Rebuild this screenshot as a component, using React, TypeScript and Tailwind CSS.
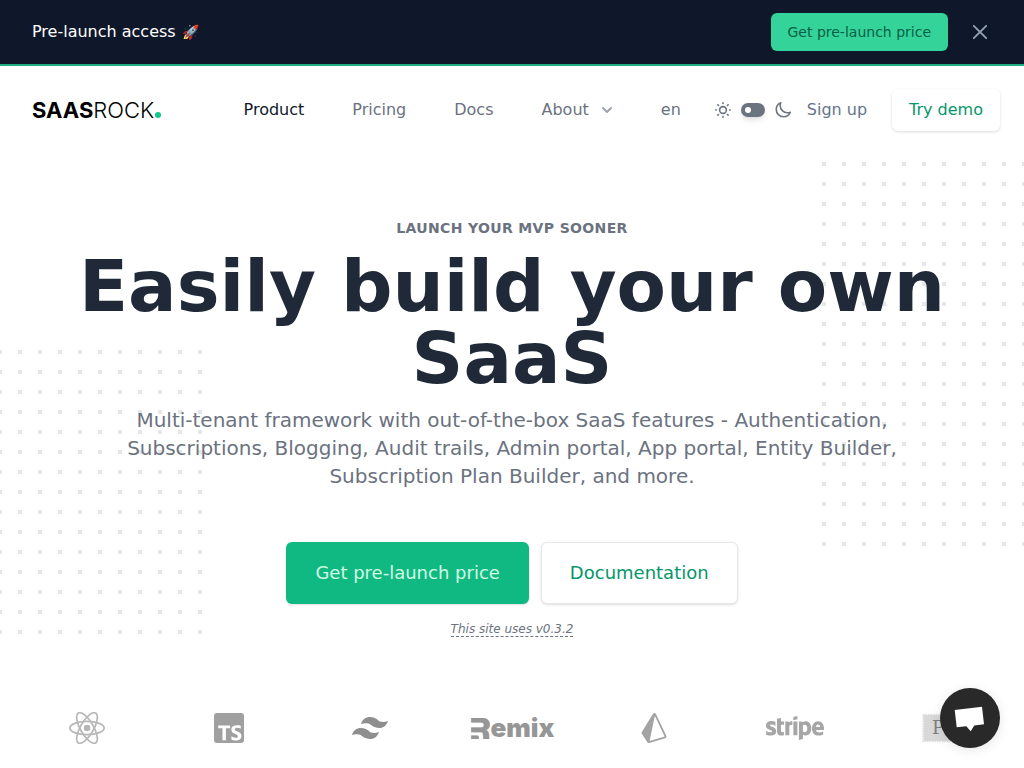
import React, { useState } from "react";
import { FaStripe } from "react-icons/fa";
import { HiOutlineMoon } from "react-icons/hi2";
import { SiPrisma, SiRemix, SiTypescript } from "react-icons/si";

function Banner({ onClose }: { onClose: () => void }) {
  return (
    <div className="flex items-center justify-between border-b-2 border-[#1fae82] bg-[#0f172a] px-8 py-[13px]">
      <p className="flex items-center gap-1.5 text-base text-white">
        Pre-launch access <span className="text-sm">🚀</span>
      </p>
      <div className="flex items-center gap-5">
        <a href="#pricing" className="rounded-md bg-[#34d399] px-[17px] py-[9px] text-sm text-[#065f46]">
          Get pre-launch price
        </a>
        <button type="button" aria-label="Dismiss" onClick={onClose} className="text-[#94a3b8]">
          <svg className="size-6" viewBox="0 0 24 24" fill="none" stroke="currentColor" strokeWidth="1.8" strokeLinecap="round">
            <path d="M5.8 5.8l12.4 12.4M18.2 5.8l-12.4 12.4" />
          </svg>
        </button>
      </div>
    </div>
  );
}

function SunIcon() {
  return (
    <svg className="size-4" viewBox="0 0 16 16" fill="none" stroke="currentColor" strokeWidth="1.6" strokeLinecap="round" aria-hidden="true">
      <circle cx="8" cy="8" r="3.4" />
      <path d="M8 .8v.6M8 14.6v.6M.8 8h.6M14.6 8h.6M2.9 2.9l.6.6M12.5 12.5l.6.6M2.9 13.1l.6-.6M12.5 3.5l.6-.6" />
    </svg>
  );
}

function Nav() {
  const [dark, setDark] = useState(false);
  return (
    <header className="flex items-center justify-between pt-[23px] pr-6 pl-8 text-base text-[#6b7280]">
      <a href="#home" className="flex items-baseline font-['Inter',sans-serif] text-[22px] leading-8 text-black">
        <span className="font-bold">SAAS</span>
        <span className="font-light">ROCK</span>
        <span className="ml-px size-1.5 rounded-full bg-[#10c98b]" />
      </a>
      <div className="flex items-center">
        <nav className="flex items-center gap-12">
          <a href="#product" className="text-[#0f172a]">Product</a>
          <a href="#pricing">Pricing</a>
          <a href="#docs">Docs</a>
          <button type="button" className="flex items-center gap-2">
            About
            <svg className="size-5 text-[#9ca3af]" viewBox="0 0 20 20" fill="currentColor" aria-hidden="true">
              <path fillRule="evenodd" clipRule="evenodd" d="M5.293 7.293a1 1 0 011.414 0L10 10.586l3.293-3.293a1 1 0 111.414 1.414l-4 4a1 1 0 01-1.414 0l-4-4a1 1 0 010-1.414z" />
            </svg>
          </button>
        </nav>
        <button type="button" className="ml-11">en</button>
        <button
          type="button"
          role="switch"
          aria-checked={dark}
          aria-label="Dark mode"
          onClick={() => setDark(!dark)}
          className="ml-[34px] flex items-center gap-2.5"
        >
          <SunIcon />
          <span className="flex h-3.5 w-6 items-center rounded-full bg-[#6b7280] px-1 shadow-md">
            <span className="size-1.5 rounded-full bg-white" />
          </span>
          <HiOutlineMoon className="-ml-px size-[18px]" strokeWidth={2.1} />
        </button>
        <a href="#signup" className="ml-[15px] text-[#64748b]">Sign up</a>
        <a href="#demo" className="ml-[25px] rounded-md bg-white px-[17px] py-[9px] text-[#059669] shadow-[0_1px_3px_rgba(0,0,0,0.14)]">
          Try demo
        </a>
      </div>
    </header>
  );
}

function Dots({ id, className }: { id: string; className: string }) {
  return (
    <svg className={className} aria-hidden="true">
      <defs>
        <pattern id={id} width="20" height="20" patternUnits="userSpaceOnUse">
          <rect width="4" height="4" fill="#e5e7eb" />
        </pattern>
      </defs>
      <rect width="100%" height="100%" fill={`url(#${id})`} />
    </svg>
  );
}

function Hero() {
  return (
    <section className="px-4 pt-[87px] text-center">
      <p className="text-sm font-semibold tracking-wide text-[#6b7280] uppercase">Launch your MVP sooner</p>
      <h1 className="mt-3 text-7xl leading-none font-extrabold text-[#1f2937]">Easily build your own SaaS</h1>
      <p className="mx-auto mt-3 max-w-[800px] text-xl text-[#6b7280]">
        Multi-tenant framework with out-of-the-box SaaS features - Authentication, Subscriptions, Blogging, Audit
        trails, Admin portal, App portal, Entity Builder, Subscription Plan Builder, and more.
      </p>
      <div className="mt-[52px] flex justify-center gap-3 text-lg">
        <a href="#pricing" className="rounded-md bg-[#10b981] px-[29px] py-[17px] text-[#d1fae5] shadow-sm">
          Get pre-launch price
        </a>
        <a href="#docs" className="rounded-md border border-[#e5e7eb] bg-white px-7 py-4 text-[#059669] shadow-sm">
          Documentation
        </a>
      </div>
      <div className="mt-[18px] flex justify-center text-xs text-[#6b7280] italic">
        <a href="#changelog" className="border-b border-dashed border-[#6b7280] leading-[14px]">This site uses v0.3.2</a>
      </div>
    </section>
  );
}

function ReactLogo() {
  return (
    <svg className="h-8 w-9" viewBox="-11.5 -10.23 23 20.46" role="img" aria-label="React">
      <circle r="2.1" fill="#b5b5b5" />
      <g fill="none" stroke="#b8b8b8" strokeWidth="1.1">
        <ellipse rx="11" ry="4.2" />
        <ellipse rx="11" ry="4.2" transform="rotate(60)" />
        <ellipse rx="11" ry="4.2" transform="rotate(120)" />
      </g>
    </svg>
  );
}

function TailwindLogo() {
  return (
    <svg className="h-[22px] w-9" viewBox="0 0 36 22" fill="#8e8e8e" role="img" aria-label="Tailwind CSS">
      <path d="M9 7C10.4 2.2 13.5 0 18 0c6.8 0 8 4.400 11 4.800 2.600.3 4.800 0 7-.8C34.400 8.800 31.500 11 27.300 11 20.800 11 19.500 7 16 6.500 13.500 6.100 11.200 6.200 9 7z" />
      <path d="M0 18C1.400 13.200 4.500 11 9 11c6.800 0 8 4.400 11 4.800 2.600.3 4.800 0 7-.8C25.400 19.800 22.500 22 18.300 22 11.800 22 10.500 18 7 17.500 4.500 17.100 2.200 17.200 0 18z" />
    </svg>
  );
}

function StampLogo() {
  return (
    <svg className="size-[30px]" viewBox="0 0 30 30" role="img" aria-label="Postmark">
      <rect x="1.5" y="2" width="27" height="26" fill="#d8d8d8" />
      <rect x="1" y="1.5" width="28" height="27" fill="none" stroke="#dedede" strokeWidth="1.5" strokeDasharray="1.5 1" />
      <text x="16" y="21" textAnchor="middle" fontSize="18" fill="#808080" className="font-['DejaVu_Serif',serif]">P</text>
    </svg>
  );
}

function Logos() {
  return (
    <section className="mt-[73px] grid grid-cols-7 px-4 pb-6">
      <div className="flex h-9 items-center justify-center"><ReactLogo /></div>
      <div className="flex h-9 items-center justify-center"><SiTypescript className="size-[30px] rounded-[3px] text-[#a0a0a0]" /></div>
      <div className="flex h-9 items-center justify-center"><TailwindLogo /></div>
      <div className="flex h-9 items-center justify-center text-[#969696]">
        <SiRemix className="size-[21px]" stroke="currentColor" strokeWidth={0.8} />
        <span className="font-['Inter',sans-serif] text-[26px] leading-6 font-black">emix</span>
      </div>
      <div className="flex h-9 items-center justify-center"><SiPrisma className="size-[30px] text-[#a3a3a3]" /></div>
      <div className="flex h-9 items-center justify-center"><FaStripe className="size-[58px] text-[#a6a6a6]" /></div>
      <div className="flex h-9 items-center justify-center"><StampLogo /></div>
    </section>
  );
}

export default function App() {
  const [banner, setBanner] = useState(true);
  return (
    <div className="min-h-screen overflow-hidden bg-white font-['DejaVu_Sans',sans-serif]">
      {banner && <Banner onClose={() => setBanner(false)} />}
      <div className="relative">
        <Dots id="dots-right" className="absolute top-24 left-1/2 ml-[310px] h-[392px] w-[404px]" />
        <Dots id="dots-left" className="absolute top-[284px] right-1/2 mr-[310px] h-[292px] w-[404px]" />
        <div className="relative">
          <Nav />
          <Hero />
          <Logos />
        </div>
      </div>
      <button
        type="button"
        aria-label="Open chat"
        className="fixed right-6 bottom-5 size-[60px] rounded-full bg-[#292929] shadow-[0_2px_12px_rgba(0,0,0,0.1)]"
      >
        <svg className="size-[60px]" viewBox="0 0 60 60" fill="#fff" aria-hidden="true">
          <path d="M14.7 22L42 18.7L44 36.3L34.3 37.5L30.7 43.3L26.3 38.3L16.7 39.3Z" />
        </svg>
      </button>
    </div>
  );
}
